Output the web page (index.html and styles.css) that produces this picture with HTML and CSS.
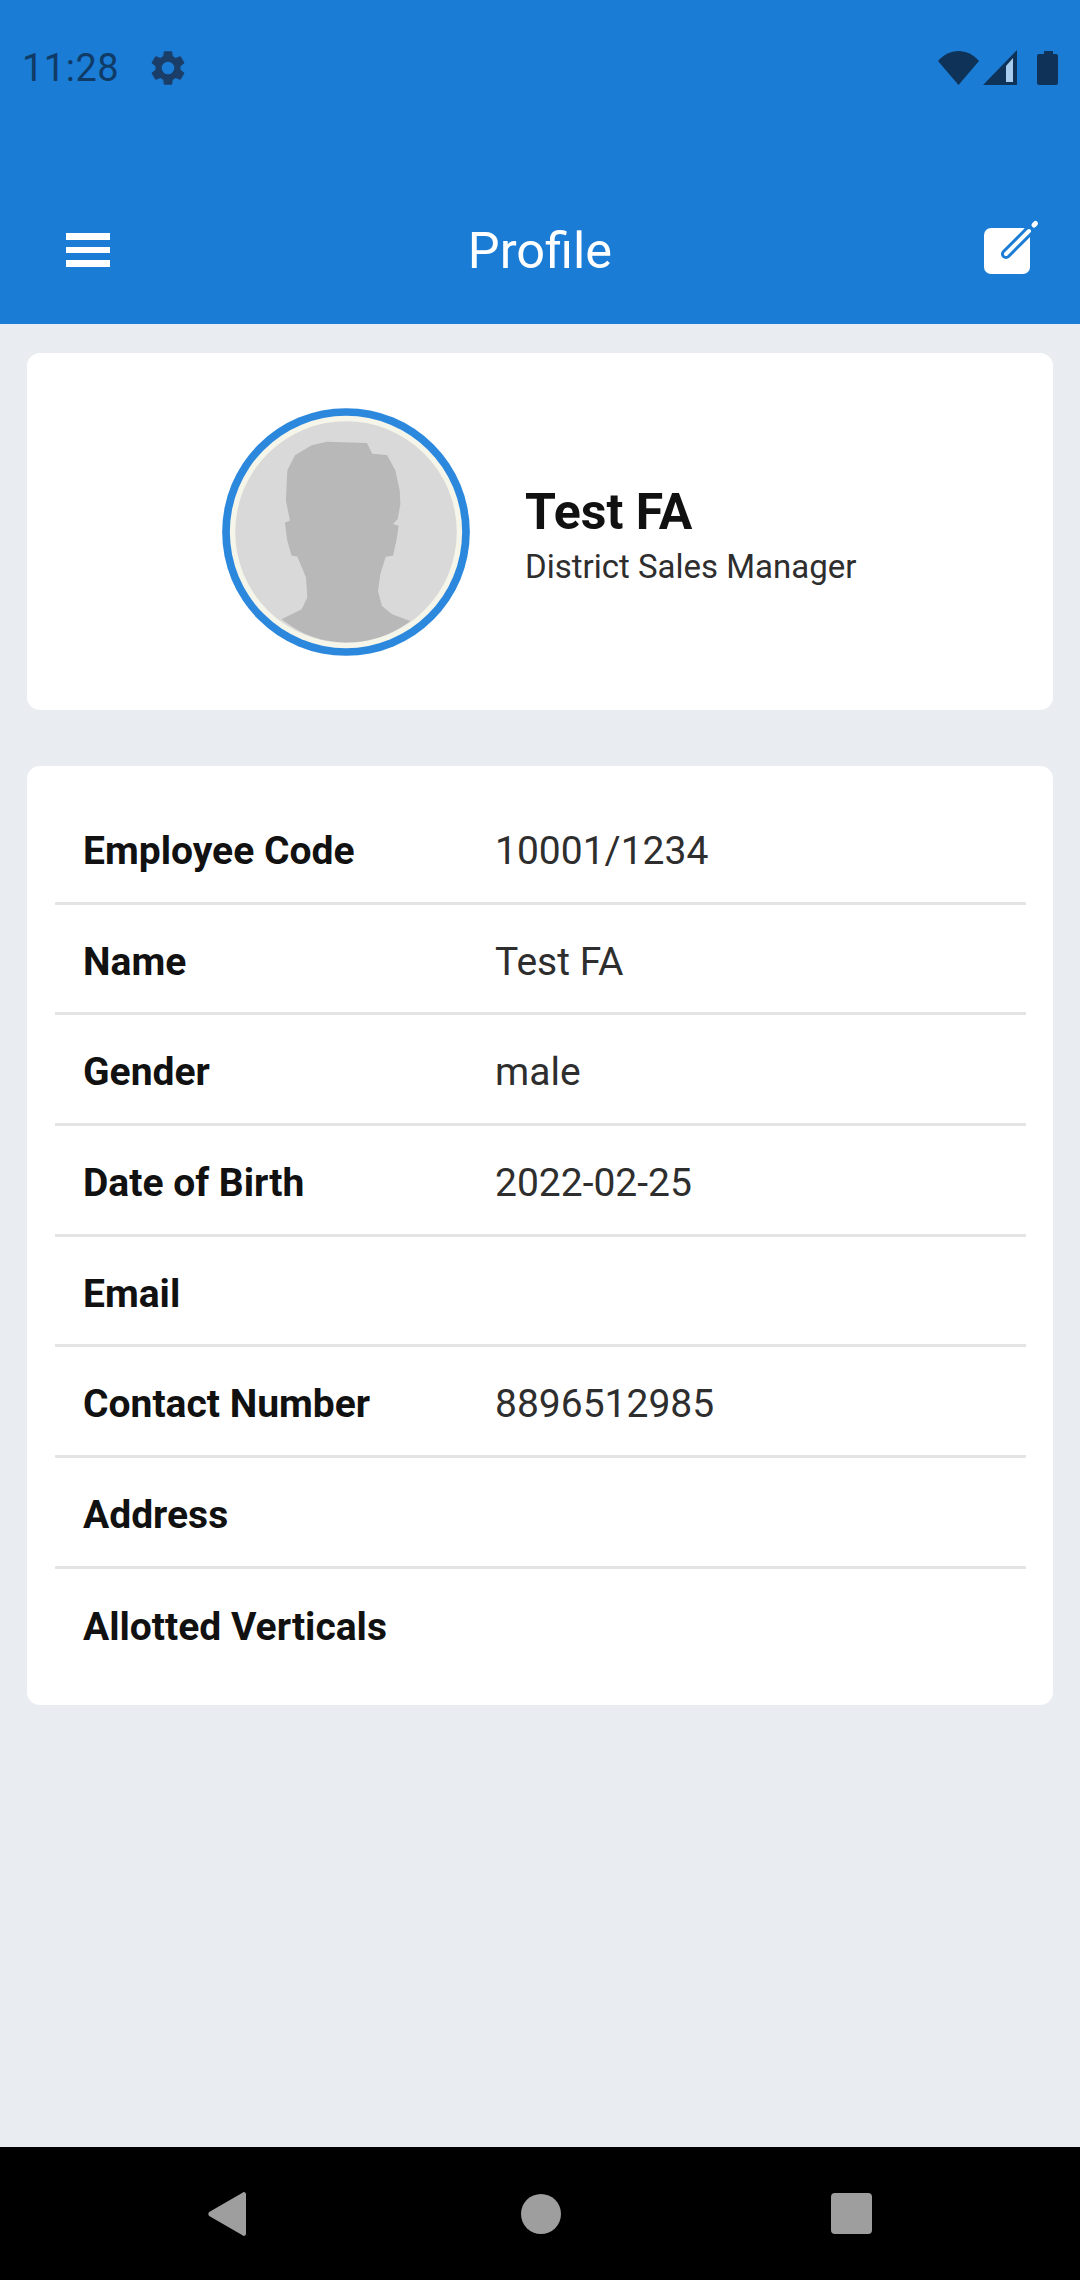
FILE: index.html
```html
<!doctype html>
<html lang="en">
<head>
  <title>Profile</title>
  <meta charset="utf-8">
  <link rel="stylesheet" href="styles.css">
</head>
<body>
<div class="app">
  <header class="top">
    <div class="status">
      <span class="clock">11:28</span>
      <svg class="gear" viewBox="0 0 24 24"><path d="M19.14 12.94c.04-.3.06-.61.06-.94 0-.32-.02-.64-.07-.94l2.03-1.58a.49.49 0 0 0 .12-.61l-1.92-3.32a.49.49 0 0 0-.59-.22l-2.39.96c-.5-.38-1.03-.7-1.62-.94l-.36-2.54a.48.48 0 0 0-.48-.41h-3.84a.48.48 0 0 0-.47.41l-.36 2.54c-.59.24-1.13.57-1.62.94l-2.39-.96a.48.48 0 0 0-.59.22L2.74 8.87a.47.47 0 0 0 .12.61l2.03 1.58c-.05.3-.09.63-.09.94s.02.64.07.94l-2.03 1.58a.49.49 0 0 0-.12.61l1.92 3.32c.12.22.37.29.59.22l2.39-.96c.5.38 1.03.7 1.62.94l.36 2.54c.05.24.24.41.48.41h3.84c.24 0 .44-.17.47-.41l.36-2.54c.59-.24 1.13-.56 1.62-.94l2.39.96c.22.08.47 0 .59-.22l1.92-3.32a.47.47 0 0 0-.12-.61l-2.01-1.58zM12 15.6A3.6 3.6 0 1 1 12 8.4a3.6 3.6 0 0 1 0 7.2z"/></svg>
      <span class="spacer"></span>
      <svg class="sys-icons" viewBox="0 0 120 36">
        <path d="M0 11C11 -2.500 30 -2.500 41 11L20.500 35z"/>
        <path d="M45 35 79 0V35z"/>
        <path fill="#a9cdee" d="M68 16 75 8V32H68z"/>
        <path d="M99 6a2 2 0 0 1 2-2h5V1h9v3h3a2 2 0 0 1 2 2v27a2 2 0 0 1-2 2h-17a2 2 0 0 1-2-2z"/>
      </svg>
    </div>
    <div class="toolbar">
      <div class="burger"><i></i><i></i><i></i></div>
      <h1 class="title">Profile</h1>
      <svg class="edit" viewBox="0 0 56 56">
        <rect x="2" y="6" width="46" height="46" rx="7" fill="#fff"/>
        <path d="M24 32 47 9" stroke="#1a7cd5" stroke-width="10" stroke-linecap="round"/>
        <path d="M24 32 47 9" stroke="#fff" stroke-width="4" stroke-linecap="round"/>
        <path d="M52 3 53.500 1.500" stroke="#fff" stroke-width="5" stroke-linecap="round"/>
      </svg>
    </div>
  </header>

  <main class="content">
    <section class="card head-card">
      <svg class="avatar" viewBox="67 54 741 740">
        <circle cx="437.500" cy="424" r="370" fill="#2b88dd"/>
        <circle cx="437.500" cy="424" r="347" fill="#f6f5ea"/>
        <circle cx="437.500" cy="424" r="331" fill="#d9d9d9"/>
        <path fill="#b8b8b8" d="M380 154 500 158 516 190 560 194 585 240 598 300 600 340 592 385 578 400 595 405 588 450 578 495 556 498 540 550 533 600 545 645 575 670 630 690C560 740 500 754 437 754 370 754 310 735 245 685L305 655 322 620 318 560 292 497 275 495 262 450 255 396 270 390 258 330 262 240 285 195 335 165z"/>
      </svg>
      <div class="who">
        <div class="who-name">Test FA</div>
        <div class="who-role">District Sales Manager</div>
      </div>
    </section>

    <section class="card info-card">
      <div class="row"><span class="label">Employee Code</span><span class="value">10001/1234</span></div>
      <div class="row"><span class="label">Name</span><span class="value">Test FA</span></div>
      <div class="row"><span class="label">Gender</span><span class="value">male</span></div>
      <div class="row"><span class="label">Date of Birth</span><span class="value">2022-02-25</span></div>
      <div class="row"><span class="label">Email</span><span class="value"></span></div>
      <div class="row"><span class="label">Contact Number</span><span class="value">8896512985</span></div>
      <div class="row"><span class="label">Address</span><span class="value"></span></div>
      <div class="row"><span class="label">Allotted Verticals</span><span class="value"></span></div>
    </section>
  </main>

  <nav class="navbar">
    <svg class="nav-back" viewBox="0 0 38 44"><path d="M34.500 .8a2 2 0 0 1 3.500 1.200V42a2 2 0 0 1-3.500 1.200L1.200 24a3 3 0 0 1 0-4z"/></svg>
    <span class="nav-home"></span>
    <span class="nav-recent"></span>
  </nav>
</div>
</body>
</html>
```

FILE: styles.css
```css
:root {
  --blue: #1a7cd5;
  --page: #e9edf2;
  --ink: #111;
  --soft-ink: #2e2e2e;
  --status-ink: #0f3b66;
}
html, body {
  margin: 0;
  padding: 0;
}
body {
  font-family: Roboto, "Liberation Sans", sans-serif;
  color: var(--ink);
  background: var(--page);
}
.app {
  display: flex;
  flex-direction: column;
  width: 1080px;
  height: 2280px;
  overflow: hidden;
}
.top {
  height: 324px;
  background: var(--blue);
  color: #fff;
}
.status {
  display: flex;
  align-items: center;
  height: 136px;
  padding: 0 22px;
  box-sizing: border-box;
  color: var(--status-ink);
}
.clock {
  font-size: 38px;
  letter-spacing: 0.5px;
}
.gear {
  width: 42px;
  height: 42px;
  margin-left: 28px;
  fill: #1a3e68;
}
.spacer {
  flex: 1;
}
.sys-icons {
  width: 120px;
  height: 36px;
  fill: #0f3358;
}
.toolbar {
  display: flex;
  align-items: center;
  justify-content: space-between;
  height: 148px;
  margin-top: 40px;
  padding: 0 42px 0 66px;
  position: relative;
}
.burger {
  display: flex;
  flex-direction: column;
  gap: 7px;
  width: 44px;
}
.burger i {
  display: block;
  height: 6.500px;
  background: #fff;
}
.title {
  position: absolute;
  left: 0;
  right: 0;
  margin: 0;
  text-align: center;
  font-size: 50.500px;
  font-weight: 400;
}
.edit {
  width: 56px;
  height: 56px;
  overflow: visible;
}
.content {
  flex: 1;
  padding: 29px 27px 0;
}
.card {
  background: #fff;
  border-radius: 13px;
}
.head-card {
  display: flex;
  align-items: center;
  gap: 55px;
  height: 357px;
  padding-left: 195px;
  margin-bottom: 56px;
}
.avatar {
  width: 248px;
  height: 248px;
}
.who {
  padding-top: 9px;
}
.who-name {
  font-size: 50px;
  font-weight: 700;
  line-height: 60px;
}
.who-role {
  margin-top: 2px;
  font-size: 33px;
  line-height: 46px;
  color: var(--soft-ink);
}
.info-card {
  padding: 28px 27px 25px 28px;
}
.row {
  display: flex;
  align-items: center;
  height: 110.700px;
  padding-top: 6px;
  padding-left: 28px;
  font-size: 39px;
  border-bottom: 3px solid #e4e4e4;
  box-sizing: border-box;
}
.row:last-child {
  border-bottom: 0;
}
.label {
  width: 412px;
  font-weight: 700;
}
.value {
  color: var(--soft-ink);
}
.navbar {
  display: flex;
  align-items: center;
  justify-content: center;
  height: 133px;
  background: #000;
}
.nav-back {
  width: 38px;
  height: 44px;
  fill: #9e9e9e;
  margin-right: 275px;
}
.nav-home {
  width: 40px;
  height: 40px;
  border-radius: 50%;
  background: #9e9e9e;
  margin-right: 270px;
}
.nav-recent {
  width: 41px;
  height: 41px;
  border-radius: 4px;
  background: #9e9e9e;
}
```
